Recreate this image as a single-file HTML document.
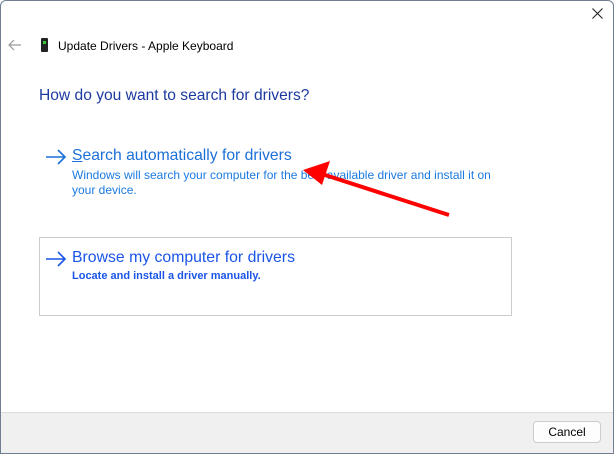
<!DOCTYPE html>
<html><head><style>
*{margin:0;padding:0;box-sizing:border-box}
body{width:614px;height:454px;background:#fff;font-family:"Liberation Sans",sans-serif;position:relative;overflow:hidden}
.win{position:absolute;left:0;top:0;width:614px;height:454px;border:1px solid #6f7f8f;border-radius:6px 6px 0 0;}
.abs{position:absolute;white-space:nowrap}
</style></head><body>
<div class="win"></div>
<svg class="abs" style="left:592px;top:8px" width="11" height="11"><path d="M0.5 0.5L10.5 10.5M10.5 0.5L0.5 10.5" stroke="#222" stroke-width="1.1"/></svg>
<svg class="abs" style="left:8px;top:39px" width="14" height="12"><path d="M1 6H13M6 1L1 6L6 11" stroke="#999" stroke-width="1.2" fill="none"/></svg>
<div class="abs" style="left:41px;top:38px;width:7px;height:14px;background:#222;border-radius:1px"><div style="position:absolute;left:2px;top:3px;width:3px;height:3px;background:#3c3"></div></div>
<div class="abs" style="left:58px;top:39px;font-size:12px;color:#000">Update Drivers - Apple Keyboard</div>
<div class="abs" style="left:39px;top:87px;font-size:15.6px;color:#1c3aa0">How do you want to search for drivers?</div>
<svg class="abs" style="left:45px;top:149px" width="22" height="16"><path d="M1 8H20M13 1L20 8L13 15" stroke="#1c6fd8" stroke-width="1.6" fill="none"/></svg>
<div class="abs" style="left:72px;top:147px;font-size:15.7px;color:#1c6fd8"><u>S</u>earch automatically for drivers</div>
<div class="abs" style="left:72px;top:168px;font-size:12px;line-height:15px;color:#1c7ae0">Windows will search your computer for the best available driver and install it on<br>your device.</div>
<div class="abs" style="left:39px;top:237px;width:473px;height:79px;border:1px solid #ccc"></div>
<svg class="abs" style="left:45px;top:251px" width="22" height="16"><path d="M1 8H20M13 1L20 8L13 15" stroke="#1a55e8" stroke-width="1.6" fill="none"/></svg>
<div class="abs" style="left:72px;top:249px;font-size:15.8px;color:#1a55e8">Browse my computer for drivers</div>
<div class="abs" style="left:72px;top:270px;font-size:11px;color:#1a55e8;font-weight:bold">Locate and install a driver manually.</div>
<svg class="abs" style="left:0;top:0" width="614" height="454"><line x1="449" y1="215" x2="322" y2="174" stroke="#f00" stroke-width="4"/><polygon points="303,170 330,161 322,185" fill="#f00"/></svg>
<div class="abs" style="left:1px;top:412px;width:612px;height:41px;background:#f0f0f0;border-top:1px solid #ddd"></div>
<div class="abs" style="left:533px;top:421px;width:68px;height:22px;border:1px solid #ccc;border-radius:4px;background:#fdfdfd;font-size:12px;text-align:center;line-height:20px;color:#000">Cancel</div>
</body></html>
